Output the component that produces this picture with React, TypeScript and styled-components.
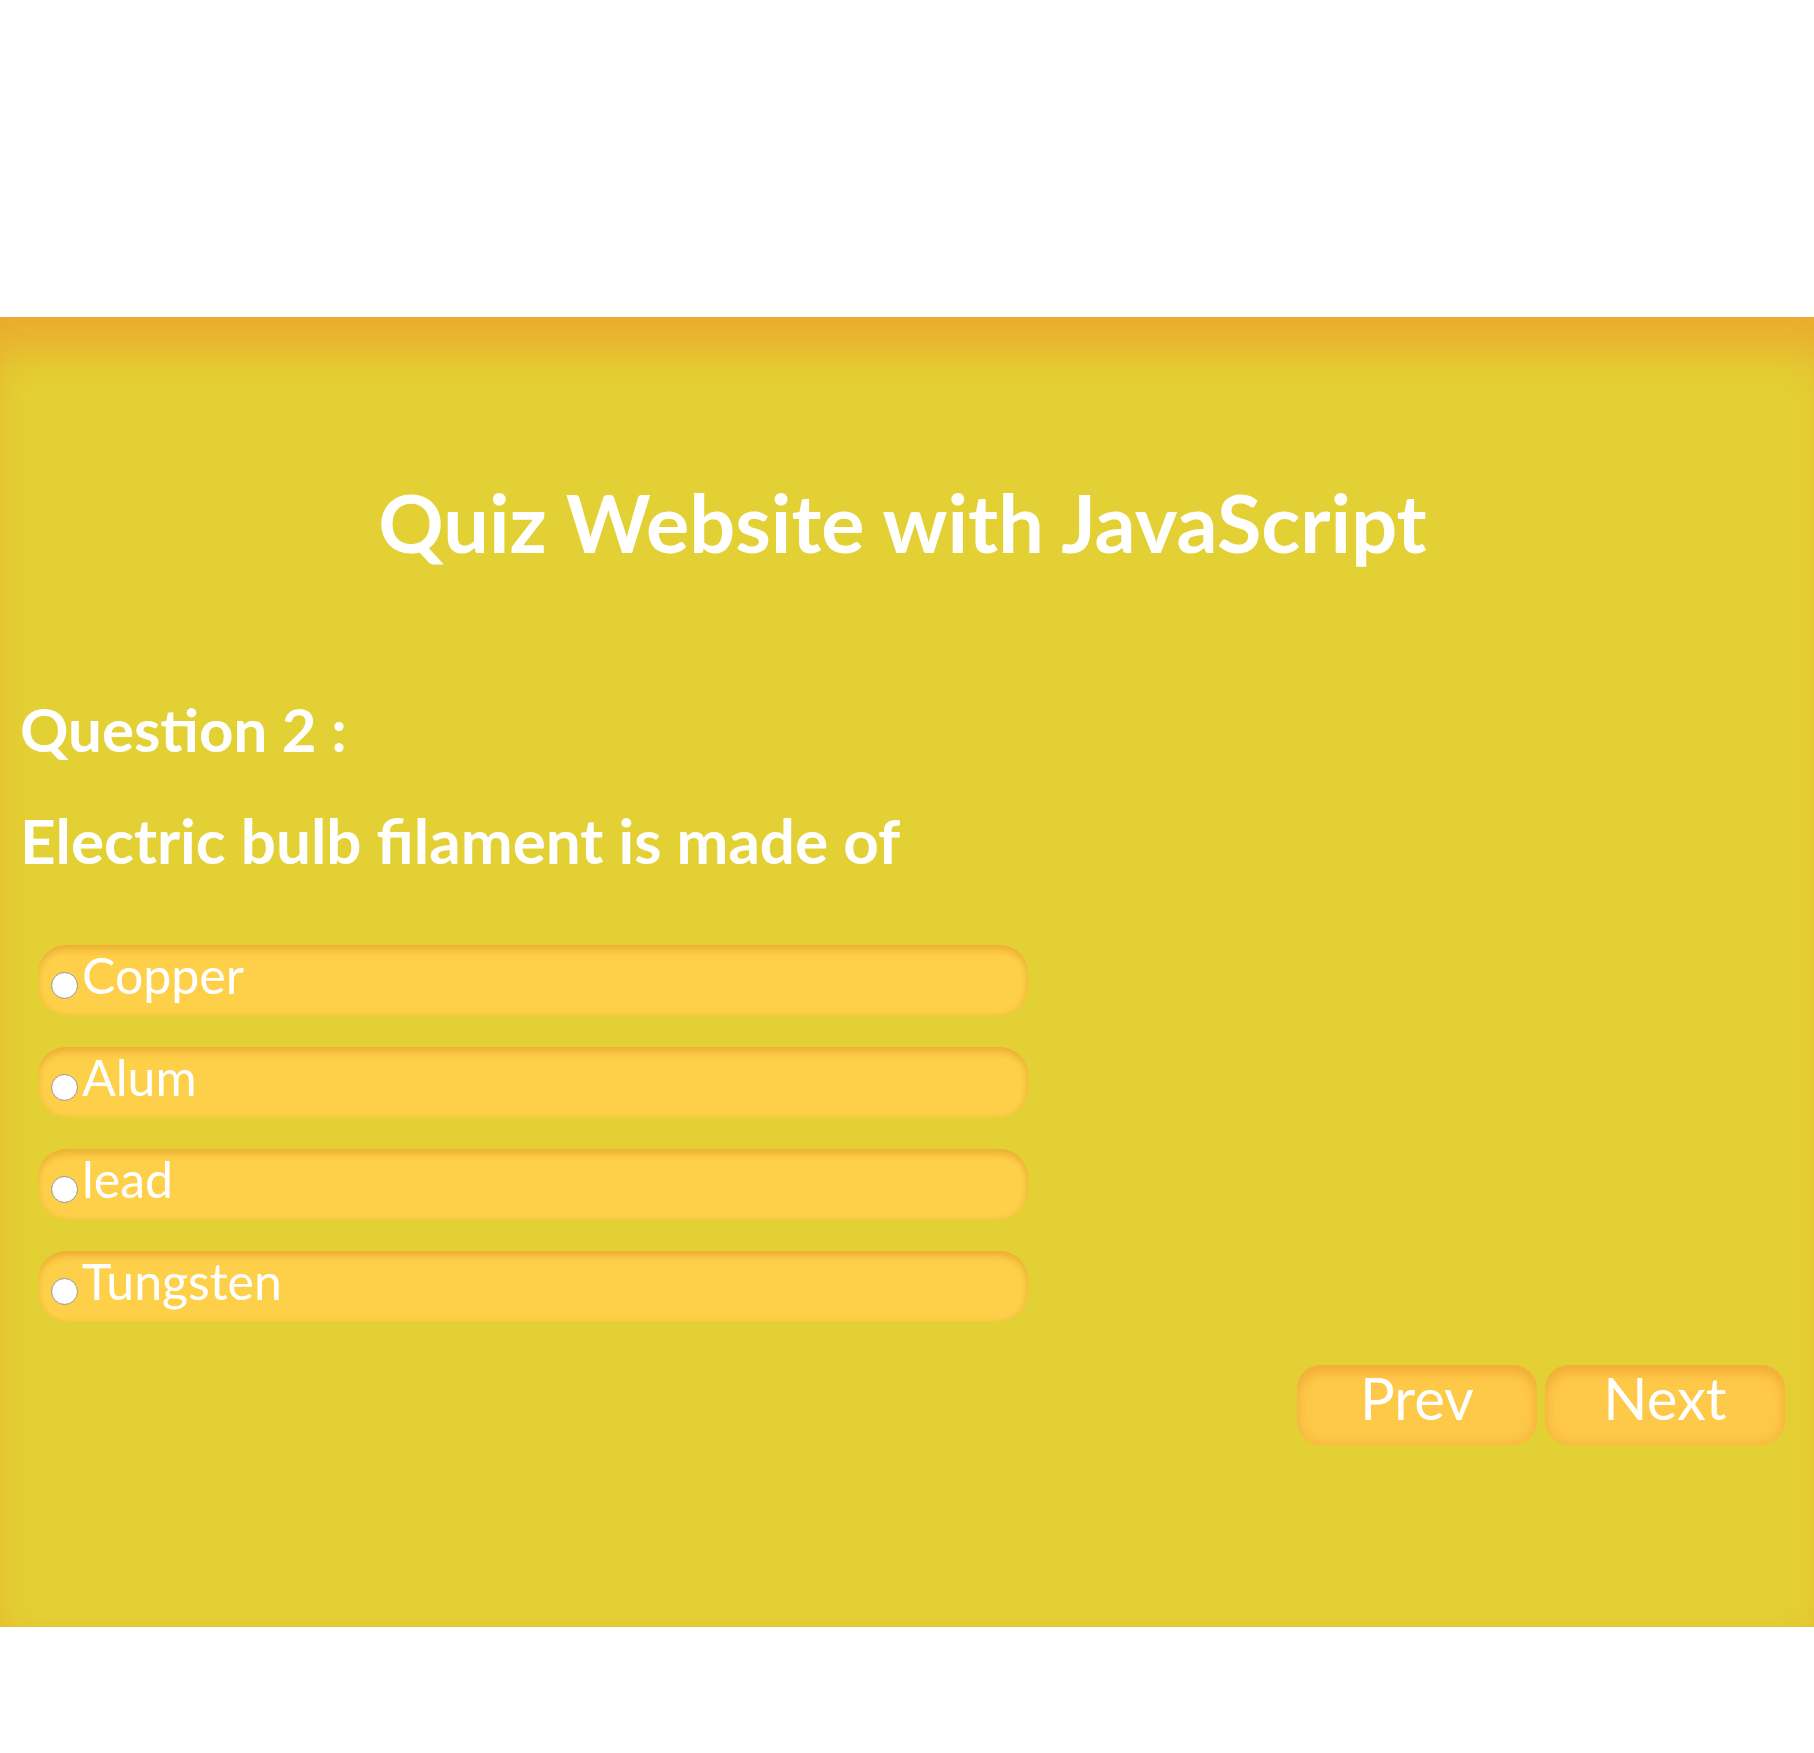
import React, { useState } from "react";
import styled, { createGlobalStyle } from "styled-components";

const Global = createGlobalStyle`
  html, body {
    margin: 0;
    padding: 0;
    background: #ffffff;
  }
  body {
    font-family: Lato, "Open Sans", sans-serif;
  }
`;

const Page = styled.div`
  padding-top: 317px;
  padding-bottom: 126px;
`;

const Panel = styled.section`
  height: 1310px;
  box-sizing: border-box;
  background: #e3d034;
  box-shadow: inset 0 55px 50px -25px #eba82e, inset 8px -8px 30px -22px #eaa62e;
  padding: 155px 29px 0 20px;
  display: flex;
  flex-direction: column;
  color: #ffffff;
`;

const Title = styled.h1`
  margin: 0;
  font-family: Lato, sans-serif;
  font-weight: 700;
  font-size: 81px;
  line-height: 100px;
  text-align: center;
  color: #ffffff;
`;

const QuestionNo = styled.h2`
  margin: 119px 0 0;
  font-weight: 700;
  font-size: 60px;
  line-height: 76px;
`;

const QuestionText = styled.h2`
  margin: 34px 0 0;
  font-weight: 700;
  font-size: 62px;
  line-height: 78px;
`;

const Options = styled.ul`
  list-style: none;
  margin: 66px 0 0 18px;
  padding: 0;
  display: flex;
  flex-direction: column;
  gap: 32px;
  width: 990px;
`;

const Option = styled.li`
  height: 70px;
  box-sizing: border-box;
  border-radius: 28px;
  background: #fed04a;
  box-shadow: inset 0 10px 10px -6px #e8ab31, inset -5px 0 8px -5px #eab034, inset 4px 0 8px -5px #eab034;
  display: flex;
  align-items: flex-start;
  padding-left: 13px;
`;

const Radio = styled.input`
  appearance: none;
  -webkit-appearance: none;
  width: 27px;
  height: 27px;
  margin: 27px 4px 0 0;
  border-radius: 50%;
  border: 1.5px solid #9a9a9a;
  box-sizing: border-box;
  background: radial-gradient(circle at 60% 40%, #ffffff 55%, #e6e6e6 100%);
  flex: none;
  &:checked {
    background: radial-gradient(circle, #1a73e8 35%, #ffffff 40%);
  }
`;

const OptionLabel = styled.label`
  font-size: 50px;
  line-height: 60px;
  margin-top: 0;
  font-weight: 400;
  color: #ffffff;
`;

const Controls = styled.div`
  margin-top: 44px;
  display: flex;
  justify-content: flex-end;
  gap: 8px;
`;

const NavButton = styled.button`
  width: 240px;
  height: 80px;
  border: none;
  border-radius: 24px;
  background: #fec848;
  box-shadow: inset 0 0 14px #f2b13b, inset 0 10px 12px -4px #efaa36;
  color: #ffffff;
  font-family: Lato, sans-serif;
  font-size: 58px;
  line-height: 1;
  display: flex;
  align-items: center;
  justify-content: center;
  padding: 0 0 14px;
  cursor: pointer;
`;

const options = ["Copper", "Alum", "lead", "Tungsten"];

export default function App() {
  const [sel, setSel] = useState<number | null>(null);
  return (
    <Page>
      <Global />
      <Panel>
        <Title>Quiz Website with JavaScript</Title>
        <QuestionNo>Question 2 :</QuestionNo>
        <QuestionText>Electric bulb filament is made of</QuestionText>
        <Options>
          {options.map((o, i) => (
            <Option key={o}>
              <Radio
                type="radio"
                name="answer"
                id={`opt-${i}`}
                checked={sel === i}
                onChange={() => setSel(i)}
              />
              <OptionLabel htmlFor={`opt-${i}`}>{o}</OptionLabel>
            </Option>
          ))}
        </Options>
        <Controls>
          <NavButton>Prev</NavButton>
          <NavButton>Next</NavButton>
        </Controls>
      </Panel>
    </Page>
  );
}
